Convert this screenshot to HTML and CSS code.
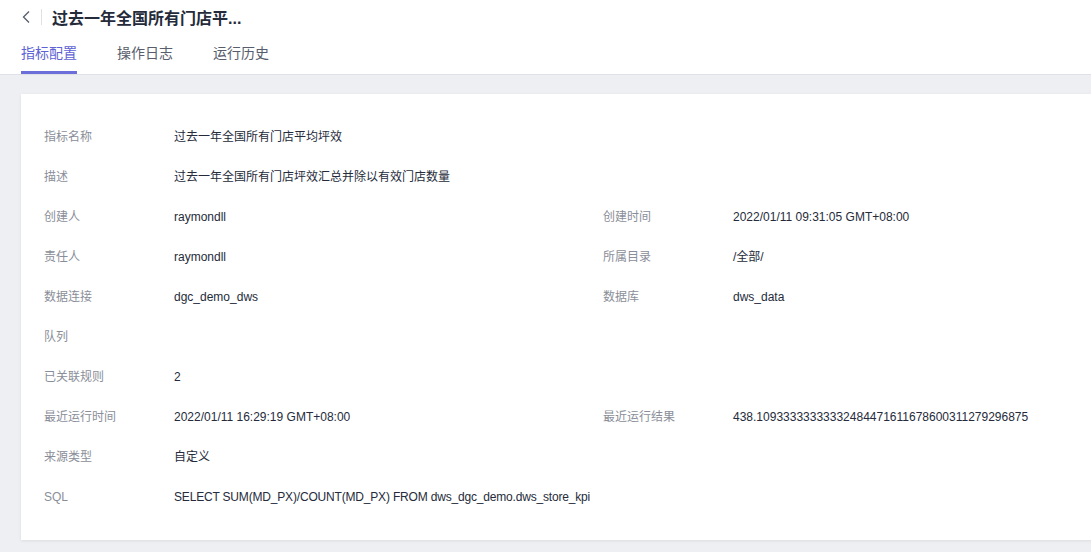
FILE: index.html
```html
<!DOCTYPE html>
<html lang="zh-CN">
    <head>
        <meta charset="utf-8">
        <title>过去一年全国所有门店平均坪效</title>
        <link rel="stylesheet" href="styles.css">
    </head>
    <body>
        <div class="header">
            <div class="titleBar">
                <span class="back">
                    <svg width="10" height="14" viewBox="0 0 10 14"><path d="M8 1.5 L2.5 7 L8 12.5" fill="none" stroke="#575d6c" stroke-width="1.3"/></svg>
                </span>
                <span class="divider"></span>
                <h1>过去一年全国所有门店平...</h1>
            </div>
            <div class="tabs">
                <span class="tab active">指标配置</span>
                <span class="tab">操作日志</span>
                <span class="tab">运行历史</span>
            </div>
        </div>
        <div class="main">
            <div class="card">
                <div class="row"><span class="label">指标名称</span><span class="value">过去一年全国所有门店平均坪效</span></div>
                <div class="row"><span class="label">描述</span><span class="value">过去一年全国所有门店坪效汇总并除以有效门店数量</span></div>
                <div class="row">
                    <span class="label">创建人</span><span class="value">raymondll</span>
                    <span class="label">创建时间</span><span class="value">2022/01/11 09:31:05 GMT+08:00</span>
                </div>
                <div class="row">
                    <span class="label">责任人</span><span class="value">raymondll</span>
                    <span class="label">所属目录</span><span class="value">/全部/</span>
                </div>
                <div class="row">
                    <span class="label">数据连接</span><span class="value">dgc_demo_dws</span>
                    <span class="label">数据库</span><span class="value">dws_data</span>
                </div>
                <div class="row"><span class="label">队列</span><span class="value"></span></div>
                <div class="row"><span class="label">已关联规则</span><span class="value">2</span></div>
                <div class="row">
                    <span class="label">最近运行时间</span><span class="value">2022/01/11 16:29:19 GMT+08:00</span>
                    <span class="label">最近运行结果</span><span class="value">438.10933333333332484471611678600311279296875</span>
                </div>
                <div class="row"><span class="label">来源类型</span><span class="value">自定义</span></div>
                <div class="row"><span class="label">SQL</span><span class="value sql">SELECT SUM(MD_PX)/COUNT(MD_PX) FROM dws_dgc_demo.dws_store_kpi</span></div>
            </div>
        </div>
    </body>
</html>
```

FILE: styles.css
```css
body{
    margin: 0;
    font-family: "Liberation Sans", "Noto Sans CJK SC", sans-serif;
    background-color: #eeeff3;
    color: #252b3a;
    overflow: hidden;
}

.header{
    background-color: #fff;
    border-bottom: 1px solid #dfe1e6;
    padding: 0 0 0 21px;
}
.titleBar{
    display: flex;
    align-items: center;
    height: 34px;
}
.back{
    display: flex;
    width: 14px;
    margin-right: 6px;
}
.divider{
    width: 1px;
    height: 16px;
    background-color: #dfe1e6;
    margin-right: 10px;
}
.titleBar h1{
    margin: 0;
    font-size: 16px;
    font-weight: bold;
    color: #252b3a;
}
.tabs{
    display: flex;
    gap: 40px;
    height: 40px;
}
.tab{
    font-size: 14px;
    line-height: 38px;
    color: #575d6c;
    border-bottom: 3px solid transparent;
    box-sizing: border-box;
    height: 40px;
}
.tab.active{
    color: #5e62d4;
    border-bottom-color: #6c6fd9;
}

.main{
    padding: 19px 0 12px 21px;
}
.card{
    background-color: #fff;
    box-shadow: 0 1px 3px rgba(0, 0, 0, 0.08);
    padding: 23px 0 23px 23px;
    margin-right: -20px;
}
.row{
    display: grid;
    grid-template-columns: 130px 429px 130px auto;
    height: 40px;
    line-height: 40px;
    font-size: 12px;
}
.label{
    color: #8a8e99;
}
.value{
    color: #252b3a;
    white-space: nowrap;
}
.sql{
    letter-spacing: -0.18px;
}
```
